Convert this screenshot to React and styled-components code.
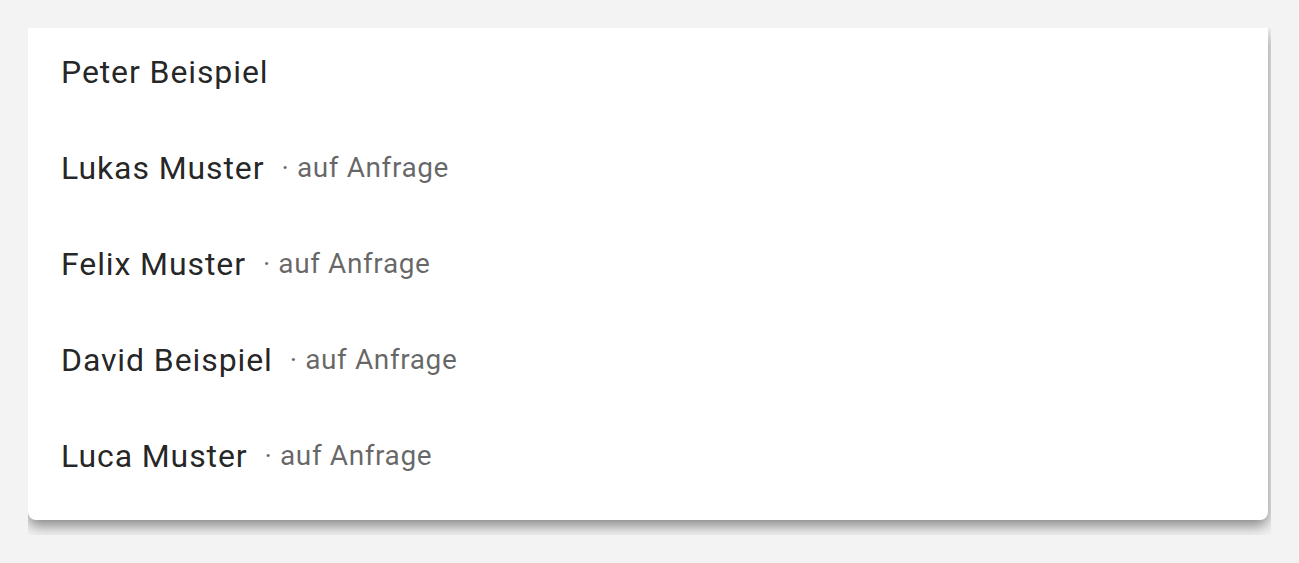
import React from "react";
import styled, { createGlobalStyle } from "styled-components";

const Global = createGlobalStyle`
  html, body { margin: 0; padding: 0; background: #f3f3f3; }
  body { font-family: Roboto, "Noto Sans", sans-serif; }
`;

const Page = styled.div`
  padding: 28px 0 0 28px;
`;

const Clip = styled.div`
  width: 1243px;
  height: 507px;
  overflow: hidden;
`;

const Card = styled.ul`
  list-style: none;
  margin: 0;
  width: 1240px;
  box-sizing: border-box;
  padding: 0 0 12px 0;
  background: #fff;
  border-radius: 0 0 8px 8px;
  box-shadow: 0 6px 14px rgba(0, 0, 0, 0.45);
`;

const Item = styled.li`
  height: 96px;
  box-sizing: border-box;
  padding: 0 33px 9px;
  display: flex;
  align-items: center;
`;

const Name = styled.span`
  font-size: 32px;
  letter-spacing: 0.9px;
  color: rgba(0, 0, 0, 0.87);
`;

const Secondary = styled.span`
  margin-left: 17px;
  font-size: 28px;
  letter-spacing: 0.6px;
  color: rgba(0, 0, 0, 0.6);
`;

const people = [
  { name: "Peter Beispiel" },
  { name: "Lukas Muster", note: "auf Anfrage" },
  { name: "Felix Muster", note: "auf Anfrage" },
  { name: "David Beispiel", note: "auf Anfrage" },
  { name: "Luca Muster", note: "auf Anfrage" },
];

export default function App() {
  return (
    <>
      <Global />
      <Page>
        <Clip>
          <Card>
            {people.map((p) => (
              <Item key={p.name}>
                <Name>{p.name}</Name>
                {p.note && <Secondary>· {p.note}</Secondary>}
              </Item>
            ))}
          </Card>
        </Clip>
      </Page>
    </>
  );
}
